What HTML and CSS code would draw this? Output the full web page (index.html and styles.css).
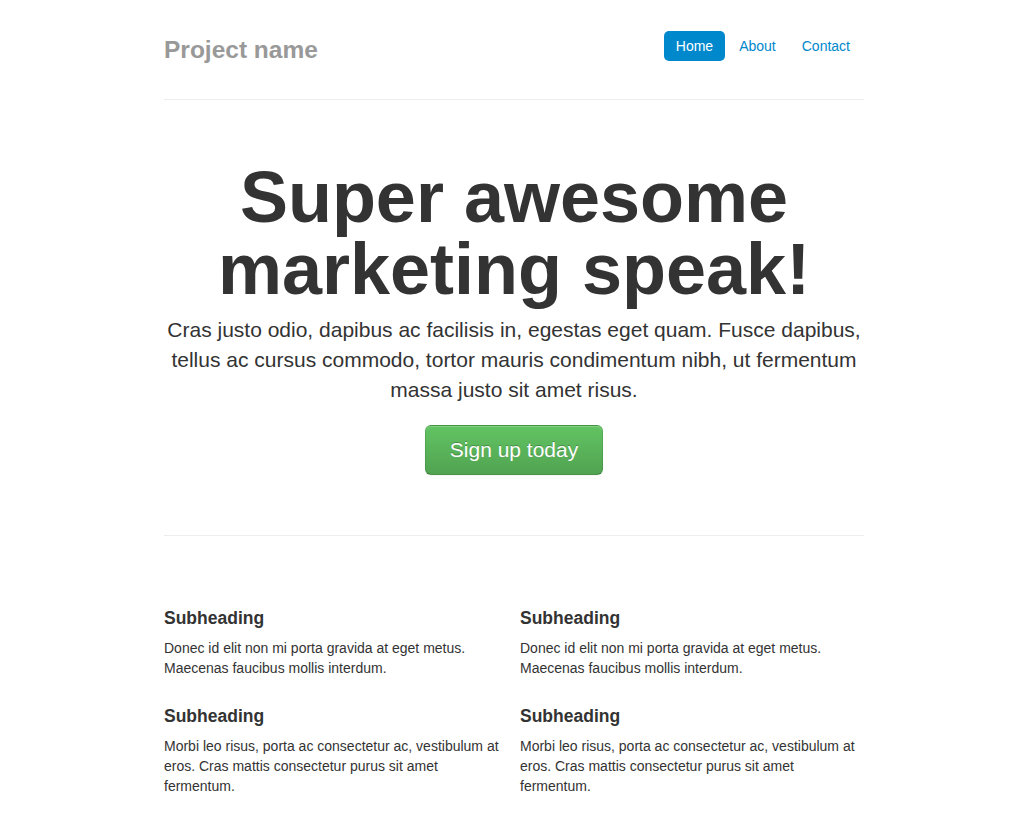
FILE: index.html
```
<!DOCTYPE html>
<html lang="en">
<head>
    <meta charset="UTF-8">
    <meta name="viewport" content="width=device-width, initial-scale=1.0">
    <title>Project name</title>
    <link rel="stylesheet" href="styles.css">
</head>
<body>
    <div class="container-narrow">
        <div class="masthead">
            <h3 class="muted">Project name</h3>
            <ul class="nav nav-pills">
                <li class="active"><a href="#">Home</a></li>
                <li><a href="#">About</a></li>
                <li><a href="#">Contact</a></li>
            </ul>
        </div>

        <hr>

        <div class="jumbotron">
            <h1>Super awesome marketing speak!</h1>
            <p class="lead">Cras justo odio, dapibus ac facilisis in, egestas eget quam. Fusce dapibus, tellus ac cursus commodo, tortor mauris condimentum nibh, ut fermentum massa justo sit amet risus.</p>
            <a class="btn btn-large btn-success" href="#">Sign up today</a>
        </div>

        <hr>

        <div class="marketing">
            <div class="span6">
                <h4>Subheading</h4>
                <p>Donec id elit non mi porta gravida at eget metus. Maecenas faucibus mollis interdum.</p>

                <h4>Subheading</h4>
                <p>Morbi leo risus, porta ac consectetur ac, vestibulum at eros. Cras mattis consectetur purus sit amet fermentum.</p>
            </div>
            <div class="span6">
                <h4>Subheading</h4>
                <p>Donec id elit non mi porta gravida at eget metus. Maecenas faucibus mollis interdum.</p>

                <h4>Subheading</h4>
                <p>Morbi leo risus, porta ac consectetur ac, vestibulum at eros. Cras mattis consectetur purus sit amet fermentum.</p>
            </div>
        </div>
    </div>
</body>
</html>
```

FILE: styles.css
```
body {
    margin: 0;
    padding: 20px 0 0;
    font-family: "Liberation Sans", Arial, sans-serif;
    font-size: 14px;
    line-height: 20px;
    color: #333;
    background-color: #fff;
}
a {
    color: #0088cc;
    text-decoration: none;
}
.container-narrow {
    max-width: 700px;
    margin: 0 auto;
}
.container-narrow > hr {
    height: 0;
    margin: 30px 0;
    border: 0;
    border-top: 1px solid #eee;
    border-bottom: 1px solid #fff;
}
.container-narrow > hr:first-of-type {
    margin-top: 29px;
}

/* header */
.masthead {
    display: flex;
    justify-content: space-between;
    align-items: flex-start;
}
.muted {
    margin: 10px 0 0;
    font-size: 24.5px;
    line-height: 40px;
    font-weight: bold;
    color: #999;
}
.nav {
    list-style: none;
    margin: 11px 0 0;
    padding: 0;
    display: flex;
}
.nav-pills a {
    display: block;
    padding: 8px 12px;
    margin-right: 2px;
    line-height: 14px;
    border-radius: 5px;
}
.nav-pills .active a {
    color: #fff;
    background-color: #0088cc;
}

/* hero */
.jumbotron {
    margin: 60px 0;
    text-align: center;
}
.jumbotron h1 {
    margin: 0 0 10px;
    font-size: 72px;
    line-height: 1;
    font-weight: bold;
}
.lead {
    margin: 0 0 20px;
    font-size: 21px;
    line-height: 30px;
    font-weight: 200;
}
.btn {
    display: inline-block;
    color: #fff;
    text-align: center;
    vertical-align: middle;
    text-shadow: 0 -1px 0 rgba(0, 0, 0, 0.25);
    border: 1px solid;
    border-color: rgba(0, 0, 0, 0.1) rgba(0, 0, 0, 0.1) rgba(0, 0, 0, 0.25);
    box-shadow: inset 0 1px 0 rgba(255, 255, 255, 0.2), 0 1px 2px rgba(0, 0, 0, 0.05);
}
.btn-large {
    padding: 14px 24px;
    font-size: 21px;
    line-height: 20px;
    border-radius: 6px;
}
.btn-success {
    background-color: #5bb75b;
    background-image: linear-gradient(to bottom, #62c462, #51a351);
}

/* subheadings */
.marketing {
    margin: 61px 0 0;
    display: grid;
    grid-template-columns: 1fr 1fr;
    column-gap: 12px;
}
.marketing h4 {
    margin: 10px 0;
    font-size: 17.5px;
    line-height: 20px;
    font-weight: bold;
}
.marketing p {
    margin: 0 0 10px;
}
.marketing p + h4 {
    margin-top: 28px;
}
```
